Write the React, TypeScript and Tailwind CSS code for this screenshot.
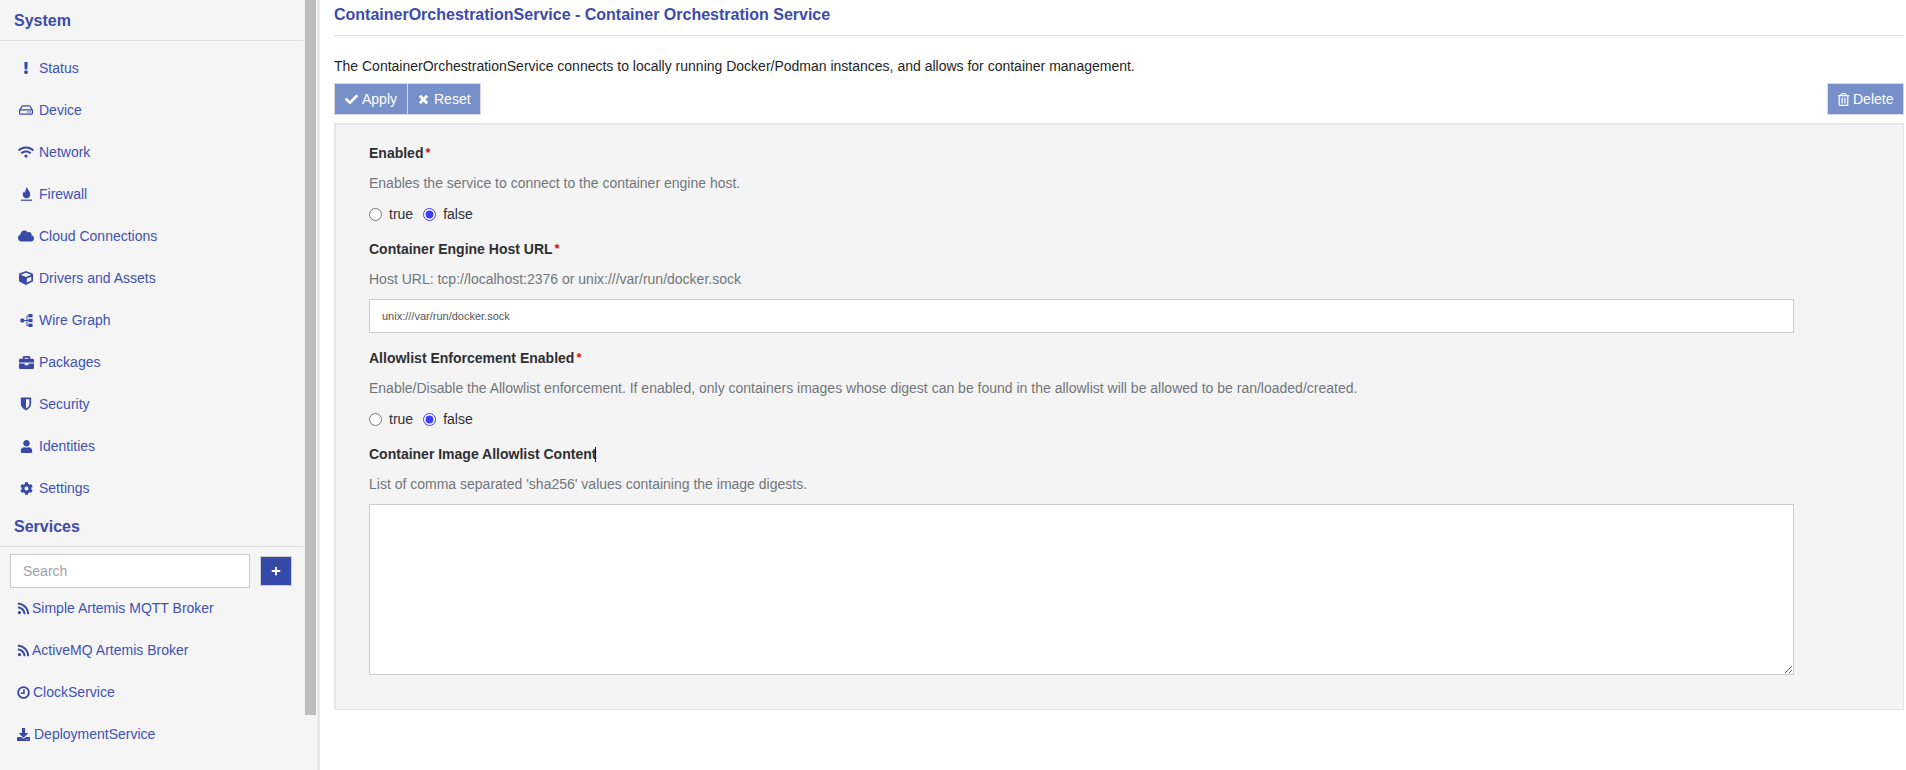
import React from "react";
import { FaExclamation, FaRegHdd, FaWifi, FaCloud, FaCube, FaBriefcase, FaUser, FaCog, FaRss, FaDownload, FaCheck, FaRegTrashAlt, FaPlus } from "react-icons/fa";

const Fire = () => (
  <svg viewBox="0 0 14 16" className="w-[13px] h-[15px]" fill="currentColor">
    <path d="M7.500 0C8 3 11 4.500 11 8c0 2.400-1.700 4-4 4s-4-1.600-4-4c0-1.500.8-2.700 1.500-3.500.2 1 .7 1.500 1.200 1.700C5.500 4 6.300 1.500 7.500 0z" />
    <rect x="1" y="13.500" width="12" height="1.300" />
  </svg>
);

const Graph = () => (
  <svg viewBox="0 0 14 15" className="w-[13px] h-[15px]" fill="currentColor">
    <rect x="0.500" y="5.500" width="4" height="4" />
    <rect x="9" y="0.500" width="4.500" height="3.600" />
    <rect x="9" y="5.700" width="4.500" height="3.600" />
    <rect x="9" y="10.900" width="4.500" height="3.600" />
    <path d="M4 7h3V2h2v.9H8v4.100h1v1H8v4.600h1v.9H7V8H4z" />
  </svg>
);

const Shield = () => (
  <svg viewBox="0 0 14 16" className="w-[12px] h-[14px]" fill="currentColor">
    <path fillRule="evenodd" d="M1 .500h12v7.500c0 3.500-3 6-6 7.500C4 14 1 11.500 1 8zM7 2.500v10.700c2-1 4-2.800 4-5.200V2.500z" />
  </svg>
);

const Clock = () => (
  <svg viewBox="0 0 14 14" className="w-[13px] h-[13px]" fill="none" stroke="currentColor">
    <circle cx="7" cy="7" r="5.800" strokeWidth="2" />
    <path d="M7.500 3.500V7.800H4" strokeWidth="1.700" />
  </svg>
);

const XIcon = () => (
  <svg viewBox="0 0 12 12" className="w-[11px] h-[11px]" fill="none" stroke="currentColor" strokeWidth="3.200">
    <path d="M2 2l8 8M10 2l-8 8" />
  </svg>
);

const sys: [string, React.ReactNode][] = [
  ["Status", <FaExclamation size={12} />],
  ["Device", <FaRegHdd size={14} />],
  ["Network", <FaWifi size={16} />],
  ["Firewall", <Fire />],
  ["Cloud Connections", <FaCloud size={16} />],
  ["Drivers and Assets", <FaCube size={14} />],
  ["Wire Graph", <Graph />],
  ["Packages", <FaBriefcase size={15} />],
  ["Security", <Shield />],
  ["Identities", <FaUser size={13} />],
  ["Settings", <FaCog size={13} />],
];

const services: [string, React.ReactNode, string][] = [
  ["Simple Artemis MQTT Broker", <FaRss size={13} />, "gap-[2px]"],
  ["ActiveMQ Artemis Broker", <FaRss size={13} />, "gap-[2px]"],
  ["ClockService", <Clock />, "gap-[3px]"],
  ["DeploymentService", <FaDownload size={13} />, "gap-[4px]"],
];

const Label = ({ text, req, caret }: { text: string; req?: boolean; caret?: boolean }) => (
  <div className="h-5 flex items-center font-bold text-[14px] text-[#2f2f33] leading-5">
    {text}
    {req && <span className="text-[#c9190b] font-bold ml-[2px] text-[13px]">*</span>}
    {caret && <span className="w-px h-[15px] bg-[#151515] -ml-px" />}
  </div>
);

const Help = ({ children }: { children: React.ReactNode }) => (
  <div className="mt-[10px] h-5 leading-5 text-[14px] text-[#72767b]">{children}</div>
);

const Radios = ({ name }: { name: string }) => (
  <div className="mt-[11px] h-5 flex items-center text-[14px] text-[#2f2f33]">
    <input type="radio" name={name} className="w-[13px] h-[13px] m-0 accent-[#3d3dff]" />
    <span className="ml-[7px]">true</span>
    <input type="radio" name={name} defaultChecked className="ml-[10px] w-[13px] h-[13px] accent-[#3d3dff]" />
    <span className="ml-[7px]">false</span>
  </div>
);

const Btn = ({ children, cls }: { children: React.ReactNode; cls?: string }) => (
  <div className={`h-[32px] flex items-center bg-[#7790c9] border border-[#d8dbe0] text-white text-[14px] ${cls ?? ""}`}>{children}</div>
);

export default function App() {
  return (
    <div className="flex h-[770px] w-[1906px] overflow-hidden bg-white font-['Liberation_Sans',Arial,sans-serif]">
      <aside className="flex w-[320px] shrink-0 bg-[#f5f5f5] border-r-[3px] border-[#e8e8e8]">
        <div className="w-[303px] mr-[2px] shrink-0 text-[#3f51b5] text-[14px]">
          <div className="h-[41px] border-b border-[#dedede] pl-[14px] pt-[10px] text-[16px] leading-[22px] font-bold text-[#3b4cab]">System</div>
          <div className="pt-[6px]">
            {sys.map(([name, icon]) => (
              <div key={name} className="h-[42px] flex items-center pl-[18px]">
                <span className="w-[16px] flex justify-center mr-[5px] text-[#3949a8]">{icon}</span>
                <span>{name}</span>
              </div>
            ))}
          </div>
          <div className="h-[38px] border-b border-[#dedede] pl-[14px] pt-[7px] text-[16px] leading-[22px] font-bold text-[#3b4cab]">Services</div>
          <div className="flex items-center pl-[10px] pt-[7px]">
            <div className="w-[240px] h-[34px] bg-white border border-[#cccccc] pl-[12px] flex items-center text-[#a3a3a3] text-[14px]">Search</div>
            <div className="ml-[10px] w-[32px] h-[30px] bg-[#354aa8] border border-[#cfcfcf] flex items-center justify-center text-white"><FaPlus size={10} /></div>
          </div>
          <div className="mt-[-1px]">
            {services.map(([name, icon, gap]) => (
              <div key={name} className={`h-[42px] flex items-center pl-[17px] ${gap}`}>
                <span className="text-[#3949a8]">{icon}</span>
                <span>{name}</span>
              </div>
            ))}
          </div>
        </div>
        <div className="w-[12px] shrink-0 bg-[#f5f5f5]">
          <div className="h-[715px] w-[11px] bg-[#bdbdbd]" />
        </div>
      </aside>
      <main className="flex-1 pl-[14px] pr-[2px]">
        <h1 className="h-[36px] border-b border-[#dedede] pt-[4px] text-[16px] leading-[22px] font-bold text-[#3b4cab]">ContainerOrchestrationService - Container Orchestration Service</h1>
        <p className="mt-[20px] h-5 leading-5 text-[14px] text-[#1f1f1f]">The ContainerOrchestrationService connects to locally running Docker/Podman instances, and allows for container management.</p>
        <div className="mt-[7px] flex justify-between">
          <div className="flex">
            <Btn cls="pl-[10px] w-[74px] gap-[4px]"><FaCheck size={13} />Apply</Btn>
            <Btn cls="pl-[10px] w-[73px] gap-[5px] border-l-0"><XIcon />Reset</Btn>
          </div>
          <Btn cls="pl-[9px] w-[77px] gap-[3px]"><FaRegTrashAlt size={13} />Delete</Btn>
        </div>
        <section className="mt-[8px] h-[587px] bg-[#f4f4f4] border-2 border-[#e6e6e6] border-b border-r pl-[33px] pt-[18px]">
          <Label text="Enabled" req />
          <Help>Enables the service to connect to the container engine host.</Help>
          <Radios name="a" />
          <div className="mt-[15px]"><Label text="Container Engine Host URL" req /></div>
          <Help>Host URL: tcp://localhost:2376 or unix:///var/run/docker.sock</Help>
          <div className="mt-[10px] w-[1425px] h-[34px] bg-white border border-[#cccccc] pl-[12px] flex items-center text-[11px] text-[#555555]">unix:///var/run/docker.sock</div>
          <div className="mt-[15px]"><Label text="Allowlist Enforcement Enabled" req /></div>
          <Help>Enable/Disable the Allowlist enforcement. If enabled, only containers images whose digest can be found in the allowlist will be allowed to be ran/loaded/created.</Help>
          <Radios name="b" />
          <div className="mt-[15px]"><Label text="Container Image Allowlist Content" caret /></div>
          <Help>List of comma separated 'sha256' values containing the image digests.</Help>
          <textarea readOnly className="block mt-[10px] w-[1425px] h-[171px] bg-white border border-[#cccccc] outline-none" />
        </section>
      </main>
    </div>
  );
}
